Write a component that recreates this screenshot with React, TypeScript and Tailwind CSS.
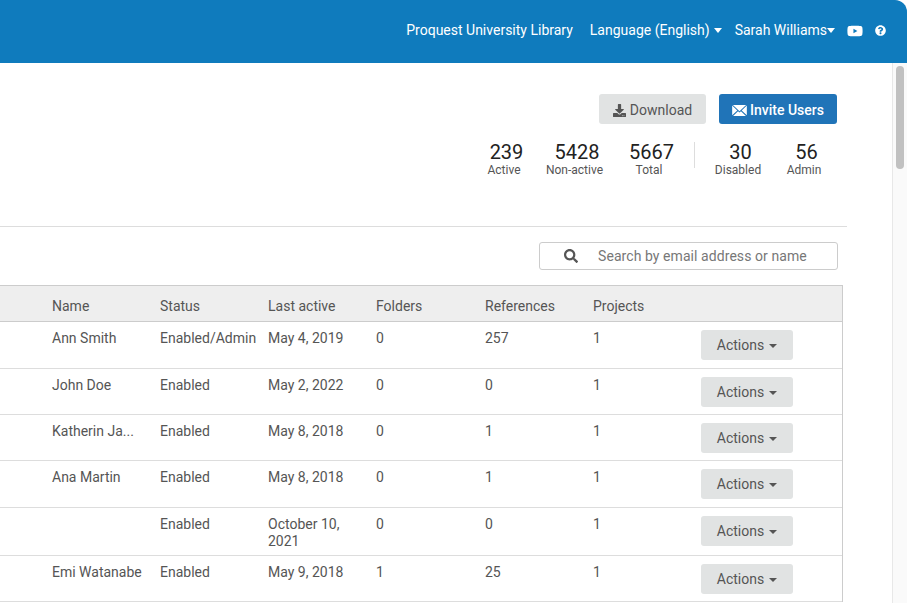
import { FaDownload, FaQuestionCircle, FaSearch, FaYoutube } from "react-icons/fa";

const stats = [
  { value: "239", label: "Active", width: "w-[70px]" },
  { value: "5428", label: "Non-active", width: "w-[71px]" },
  { value: "5667", label: "Total", width: "w-[78px]" },
];

const stats2 = [
  { value: "30", label: "Disabled", width: "w-[86px]" },
  { value: "56", label: "Admin", width: "w-[46px]" },
];

const rows = [
  { name: "Ann Smith", status: "Enabled/Admin", last: "May 4, 2019", folders: "0", refs: "257", h: "h-[47px]" },
  { name: "John Doe", status: "Enabled", last: "May 2, 2022", folders: "0", refs: "0", h: "h-[46px]" },
  { name: "Katherin Ja...", status: "Enabled", last: "May 8, 2018", folders: "0", refs: "1", h: "h-[46px]" },
  { name: "Ana Martin", status: "Enabled", last: "May 8, 2018", folders: "0", refs: "1", h: "h-[47px]" },
  { name: "", status: "Enabled", last: "October 10, 2021", folders: "0", refs: "0", h: "h-[48px]" },
  { name: "Emi Watanabe", status: "Enabled", last: "May 9, 2018", folders: "1", refs: "25", h: "h-[46px]" },
];

const cols = "grid grid-cols-[52px_108px_108px_108px_109px_108px_108px_1fr]";

function Stat({ value, label, width }: { value: string; label: string; width: string }) {
  return (
    <div className={`${width} text-center`}>
      <div className="pl-[5px] text-[20px] leading-[24px] text-[#222]">{value}</div>
      <div className="mt-[-1px] text-[12px] leading-[14px] text-[#555]">{label}</div>
    </div>
  );
}

function Caret({ size = "white" }: { size?: "white" | "dark" }) {
  if (size === "white") {
    return <span className="inline-block border-x-[4.5px] border-t-[5px] border-x-transparent border-t-white" />;
  }
  return <span className="mt-[2px] ml-[5px] inline-block border-x-[4px] border-t-[4px] border-x-transparent border-t-[#555] align-middle" />;
}

export default function App() {
  return (
    <div className="flex h-[603px] w-[907px] flex-col overflow-hidden bg-white font-['Roboto',sans-serif] text-[14px] text-[#555]">
      {/* Top bar */}
      <header className="flex h-[63px] shrink-0 items-center justify-end rounded-tr-[12px] bg-[#0f7bbd] pr-[21px] pb-[2px] text-white">
        <span>Proquest University Library</span>
        <span className="ml-[17px] flex items-center gap-[4px]">
          Language (English) <Caret />
        </span>
        <span className="ml-[13px] flex items-center">
          Sarah Williams
          <Caret />
        </span>
        <FaYoutube className="ml-[12px] text-[16px]" />
        <FaQuestionCircle className="ml-[12px] text-[11px]" />
      </header>

      <div className="flex min-h-0 flex-1">
        <main className="w-[892px] shrink-0">
          {/* Summary */}
          <section className="h-[164px] w-[847px] border-b border-[#ddd] pt-[31px]">
            <div className="flex justify-end gap-[13px] pr-[10px]">
              <button className="flex h-[30px] w-[107px] items-center justify-center gap-[4px] rounded-[3px] bg-[#e1e3e3] pt-[2px] text-[#555]">
                <FaDownload className="text-[13px]" />
                Download
              </button>
              <button className="flex h-[30px] w-[118px] items-center justify-center gap-[3px] rounded-[3px] bg-[#2074b8] pt-[2px] font-medium text-white">
                <svg viewBox="0 0 16 12" className="h-[11px] w-[15px]" fill="currentColor">
                  <path d="M0 0.6 L5.6 6 L0 11.2 Z M16 0.6 L10.4 6 L16 11.2 Z M0.8 0 H15.2 L8 6.8 Z M1 12 L6.4 6.8 L8 8.3 L9.6 6.8 L15 12 Z" />
                </svg>
                Invite Users
              </button>
            </div>
            <div className="mt-[16px] flex justify-end pr-[20px]">
              {stats.map((s) => (
                <Stat key={s.label} {...s} />
              ))}
              <div className="mt-[2px] ml-[6px] h-[26px] w-px bg-[#ddd]" />
              {stats2.map((s) => (
                <Stat key={s.label} {...s} />
              ))}
            </div>
          </section>

          {/* Search */}
          <div className="flex h-[58px] w-[847px] items-start justify-end pt-[15px] pr-[9px]">
            <div className="flex h-[28px] w-[299px] items-center rounded-[3px] border border-[#ccc] bg-white">
              <FaSearch className="ml-[24px] text-[14px] text-[#555]" />
              <input
                className="ml-[20px] min-w-0 flex-1 tracking-[0.07px] outline-none placeholder:text-[#777]"
                placeholder="Search by email address or name"
              />
            </div>
          </div>

          {/* Users table */}
          <div className="w-[843px] border-r border-[#ccc]">
            <div className={`${cols} h-[37px] items-center border-y border-[#ccc] bg-[#eee] pt-[6px]`}>
              <span />
              <span>Name</span>
              <span>Status</span>
              <span>Last active</span>
              <span>Folders</span>
              <span>References</span>
              <span>Projects</span>
              <span />
            </div>
            {rows.map((r, i) => (
              <div key={i} className={`${cols} ${r.h} border-b border-[#ddd] leading-[17px]`}>
                <span />
                <span className="pt-[8px]">{r.name}</span>
                <span className="pt-[8px]">{r.status}</span>
                <span className="pt-[8px] pr-[10px]">{r.last}</span>
                <span className="pt-[8px]">{r.folders}</span>
                <span className="pt-[8px]">{r.refs}</span>
                <span className="pt-[8px]">1</span>
                <span className="pt-[8px]">
                  <button className="flex h-[30px] w-[92px] items-center justify-center rounded-[3px] bg-[#e1e3e3]">
                    Actions
                    <Caret size="dark" />
                  </button>
                </span>
              </div>
            ))}
          </div>
        </main>

        {/* Scrollbar */}
        <div className="w-[15px] shrink-0 border-l border-[#e8e8e8] bg-[#fafafa] pt-[3px] pl-[3px]">
          <div className="h-[103px] w-[8px] rounded-[4px] bg-[#c1c1c1]" />
        </div>
      </div>
    </div>
  );
}
